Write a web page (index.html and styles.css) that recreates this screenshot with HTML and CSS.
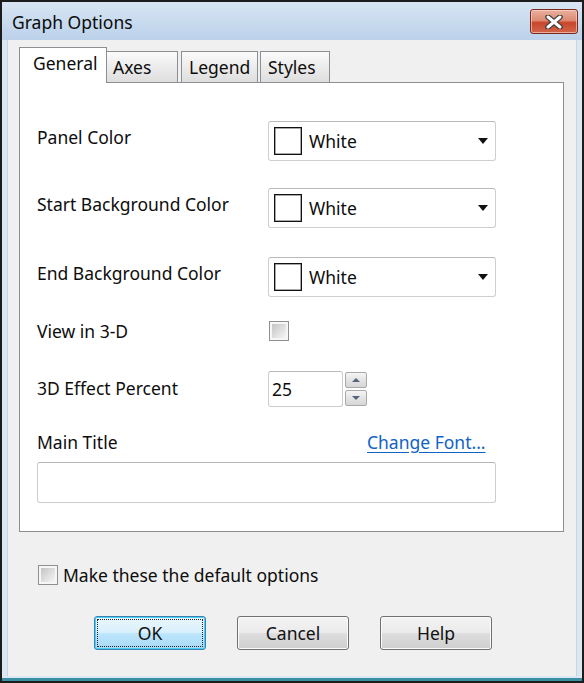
FILE: index.html
```html
<!DOCTYPE html>
<html>
<head>
<meta charset="utf-8">
<link rel="stylesheet" href="styles.css">
</head>
<body>
<div class="window">
  <div class="titlebar">
    <span class="title">Graph Options</span>
    <button class="close" aria-label="Close">
      <svg width="18" height="14" viewBox="0 0 18 14">
        <path d="M3 2 L15 12 M15 2 L3 12" stroke="#3a3a3a" stroke-width="5.5" stroke-linecap="round"/>
        <path d="M3 2 L15 12 M15 2 L3 12" stroke="#ffffff" stroke-width="3" stroke-linecap="round"/>
      </svg>
    </button>
  </div>
  <div class="client">
    <div class="tabs">
      <div class="tab tab-active">General</div>
      <div class="tab tab-axes">Axes</div>
      <div class="tab tab-legend">Legend</div>
      <div class="tab tab-styles">Styles</div>
    </div>
    <div class="panel">
      <div class="row row-combo row-1">
        <div class="label label-top">Panel Color</div>
        <div class="combo"><span class="swatch"></span><span class="combo-text">White</span><span class="arrow"></span></div>
      </div>
      <div class="row row-combo row-2">
        <div class="label label-top">Start Background Color</div>
        <div class="combo"><span class="swatch"></span><span class="combo-text">White</span><span class="arrow"></span></div>
      </div>
      <div class="row row-combo row-3">
        <div class="label label-top">End Background Color</div>
        <div class="combo"><span class="swatch"></span><span class="combo-text">White</span><span class="arrow"></span></div>
      </div>
      <div class="row row-check">
        <div class="label">View in 3-D</div>
        <span class="checkbox"></span>
      </div>
      <div class="row row-spin">
        <div class="label label-spin">3D Effect Percent</div>
        <div class="spin-wrap">
          <div class="numbox">25</div>
          <div class="spin">
            <span class="spin-btn"><span class="tri-up"></span></span>
            <span class="spin-btn"><span class="tri-down"></span></span>
          </div>
        </div>
      </div>
      <div class="row row-title">
        <div class="label">Main Title</div>
        <a class="link" href="#">Change Font...</a>
      </div>
      <div class="textbox"></div>
    </div>
    <div class="default-row">
      <span class="checkbox"></span>
      <span class="default-label">Make these the default options</span>
    </div>
    <div class="buttons">
      <button class="btn btn-default">OK</button>
      <button class="btn">Cancel</button>
      <button class="btn">Help</button>
    </div>
  </div>
</div>
</body>
</html>
```
FILE: styles.css
```css
html, body {
  margin: 0;
  padding: 0;
}
body {
  font-family: "Noto Sans", "Open Sans", sans-serif;
  font-size: 17.5px;
  color: #0d0d0d;
}
.window {
  width: 584px;
  height: 683px;
  box-sizing: border-box;
  border: 2px solid #1c1c1c;
  background: #dbe7f3;
  box-shadow: inset 0 -3px 0 #3b8fa3;
  display: flex;
  flex-direction: column;
}
.titlebar {
  height: 38px;
  flex: none;
  display: flex;
  align-items: flex-start;
  justify-content: space-between;
  background: linear-gradient(#d9e5f3, #c3d7ed 70%, #bcd2ea);
}
.title {
  margin: 9px 0 0 10px;
  line-height: 22px;
  color: #0b0b0b;
}
.close {
  margin: 7px 4px 0 0;
  width: 48px;
  height: 25px;
  padding: 0;
  border: 1px solid #7a2a1c;
  border-radius: 3px;
  background: linear-gradient(#eab0a0 0%, #dd8a72 45%, #c7462c 55%, #d2664a 100%);
  box-shadow: inset 0 0 0 1px rgba(255, 220, 210, 0.6);
  display: flex;
  align-items: center;
  justify-content: center;
}
.client {
  flex: 1;
  margin: 0 5px 5px 5px;
  background: #f0f0f0;
  border-left: 1px solid #c6d3e0;
  border-right: 1px solid #c6d3e0;
  padding: 7px 11px 0 11px;
  display: flex;
  flex-direction: column;
}
.tabs {
  display: flex;
  align-items: flex-end;
  height: 35px;
}
.tab {
  box-sizing: border-box;
  height: 31px;
  border: 1px solid #8c8e94;
  border-bottom: none;
  background: linear-gradient(#fbfbfb, #ececec 50%, #dedede);
  line-height: 30px;
  padding-left: 7px;
}
.tab-active {
  position: relative;
  z-index: 1;
  width: 88px;
  height: 36px;
  margin-bottom: -1px;
  background: #fff;
  line-height: 30px;
  padding-left: 13px;
}
.tab-axes {
  width: 71px;
  border-left: none;
  padding-left: 6px;
}
.tab-legend {
  width: 77px;
  margin-left: 3px;
}
.tab-styles {
  width: 70px;
  margin-left: 2px;
}
.panel {
  width: 545px;
  box-sizing: border-box;
  border: 1px solid #8c8e94;
  background: #fff;
  padding: 38px 0 28px 17px;
  display: flex;
  flex-direction: column;
}
.row {
  display: flex;
  align-items: center;
}
.label {
  width: 231px;
  flex: none;
  line-height: 22px;
}
.row-combo {
  height: 40px;
  align-items: flex-start;
}
.label-top {
  padding-top: 5px;
}
.label-spin {
  margin-top: -3px;
}
.row-2 { margin-top: 27px; }
.row-3 { margin-top: 29px; }
.combo {
  width: 228px;
  height: 40px;
  box-sizing: border-box;
  border: 1px solid #cfcfcf;
  border-top-color: #b9b9b9;
  border-radius: 3px;
  background: #fff;
  display: flex;
  align-items: center;
  padding-left: 5px;
}
.swatch {
  width: 28px;
  height: 28px;
  box-sizing: border-box;
  border: 1px solid #111;
  box-shadow: inset 0 0 0 0.5px #555;
  background: #fff;
  flex: none;
}
.combo-text {
  margin-left: 7px;
  flex: 1;
  line-height: 22px;
}
.arrow {
  width: 0;
  height: 0;
  border-left: 5px solid transparent;
  border-right: 5px solid transparent;
  border-top: 6px solid #111;
  margin-right: 7px;
}
.row-check {
  margin-top: 24px;
  height: 20px;
}
.checkbox {
  width: 20px;
  height: 20px;
  box-sizing: border-box;
  border: 1px solid #8e8f8f;
  padding: 2px;
  flex: none;
  background: linear-gradient(135deg, #c4c4c4, #ececec 80%, #f4f4f4) content-box, linear-gradient(#f6f6f6, #f6f6f6);
}
.row-check .checkbox {
  margin-left: 1px;
}
.row-spin {
  margin-top: 30px;
  height: 36px;
}
.spin-wrap {
  display: flex;
  align-items: center;
}
.numbox {
  width: 75px;
  height: 36px;
  box-sizing: border-box;
  border: 1px solid #cdcdcd;
  border-top-color: #bababa;
  border-radius: 3px;
  background: #fff;
  line-height: 34px;
  padding-left: 3px;
}
.spin {
  display: flex;
  flex-direction: column;
  gap: 2px;
  margin-left: 2px;
}
.spin-btn {
  width: 22px;
  height: 16px;
  box-sizing: border-box;
  border: 1px solid #a9a9a9;
  border-radius: 2px;
  background: linear-gradient(#f4f4f4, #e4e4e4 50%, #d6d6d6);
  display: flex;
  align-items: center;
  justify-content: center;
}
.tri-up {
  width: 0;
  height: 0;
  border-left: 4px solid transparent;
  border-right: 4px solid transparent;
  border-bottom: 4px solid #56657f;
}
.tri-down {
  width: 0;
  height: 0;
  border-left: 4px solid transparent;
  border-right: 4px solid transparent;
  border-top: 4px solid #56657f;
}
.row-title {
  margin-top: 24px;
  height: 22px;
  align-items: flex-start;
}
.row-title .label {
  width: 330px;
}
.link {
  color: #0f63c4;
  text-decoration: underline;
  text-underline-offset: 3px;
  line-height: 22px;
}
.textbox {
  margin-top: 9px;
  width: 459px;
  height: 41px;
  box-sizing: border-box;
  border: 1px solid #cdcdcd;
  border-top-color: #b5b5b5;
  border-radius: 3px;
  background: #fff;
}
.default-row {
  margin-top: 33px;
  margin-left: 19px;
  display: flex;
  align-items: center;
  height: 20px;
}
.default-label {
  margin-left: 5px;
  line-height: 22px;
}
.buttons {
  margin-top: 31px;
  padding-left: 75px;
  display: flex;
  gap: 31px;
}
.btn {
  width: 112px;
  height: 34px;
  box-sizing: border-box;
  border: 1px solid #707070;
  border-radius: 3px;
  background: linear-gradient(#f3f3f3 0%, #ebebeb 48%, #dddddd 52%, #cfcfcf 100%);
  box-shadow: inset 0 0 0 1px #fbfbfb;
  font-family: "Noto Sans", "Open Sans", sans-serif;
  font-size: 17.5px;
  color: #111;
  padding: 0;
  line-height: 30px;
}
.btn-default {
  border-color: #3c7fb1;
  background: linear-gradient(#eaf6fd 0%, #d9f0fc 48%, #bee6fd 52%, #a7d9f5 100%);
  box-shadow: inset 0 0 0 1px #48d0f6;
  outline: 1px dotted #222;
  outline-offset: -4px;
}
```
